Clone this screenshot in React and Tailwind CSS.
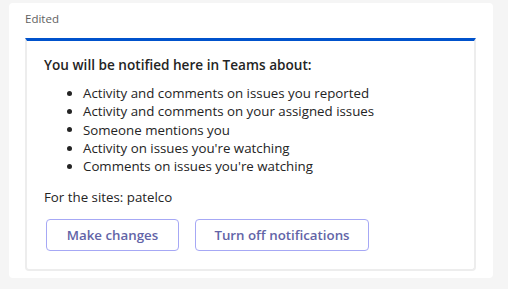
import React from "react";

const items = [
  "Activity and comments on issues you reported",
  "Activity and comments on your assigned issues",
  "Someone mentions you",
  "Activity on issues you're watching",
  "Comments on issues you're watching",
];

export default function App() {
  return (
    <div
      className="w-[508px] h-[289px] bg-[#f5f5f5] pt-[3px] pl-[9px] overflow-hidden"
      style={{ fontFamily: '"Segoe UI", "Open Sans", sans-serif' }}
    >
      <div className="w-[484px] h-[275px] bg-white rounded-[4px] pt-[9px] pl-[16px]">
        <div className="text-[11.5px] leading-[14px] text-[#616161]">Edited</div>
        <div className="mt-[12px] w-[451px] h-[233px] border-t-[3px] border-t-[#0052cc] border-x-2 border-b-2 border-x-[#ededed] border-b-[#ededed] rounded-b-[4px] pl-[17px] pt-[14px]">
          <div className="text-[13.6px] leading-[20px] font-semibold text-[#242424]">
            You will be notified here in Teams about:
          </div>
          <ul className="mt-[9px] pl-[23px] text-[13.3px] leading-[18.3px] text-[#242424]">
            {items.map((t) => (
              <li key={t} className="flex items-center">
                <span className="w-[5px] h-[5px] rounded-full bg-[#242424] mr-[11px] shrink-0" />
                {t}
              </li>
            ))}
          </ul>
          <div className="mt-[12px] text-[13.3px] leading-[20px] text-[#242424]">For the sites: patelco</div>
          <div className="mt-[12px] flex gap-[16px] pl-[2px]">
            <button className="w-[133px] h-[32px] border border-[#a6a8f5] rounded-[4px] text-[13.3px] font-semibold text-[#6264a7]">
              Make changes
            </button>
            <button className="w-[174px] h-[32px] border border-[#a6a8f5] rounded-[4px] text-[13.3px] font-semibold text-[#6264a7]">
              Turn off notifications
            </button>
          </div>
        </div>
      </div>
    </div>
  );
}
